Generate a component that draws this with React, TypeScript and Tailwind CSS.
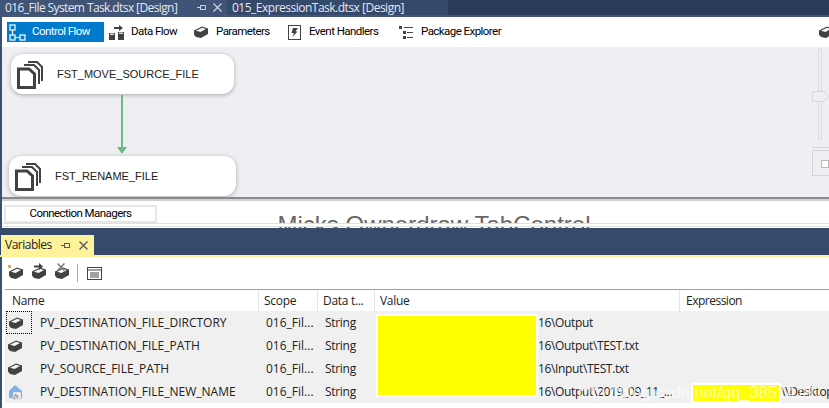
import React from "react";

const font = { fontFamily: '"Open Sans", "Noto Sans", sans-serif' };
const ui = { fontFamily: 'Roboto, "Open Sans", sans-serif' };
const arial = { fontFamily: '"Liberation Sans", sans-serif' };

const BoxIcon = ({ className = "" }: { className?: string }) => (
  <svg viewBox="0 0 16 16" className={className}>
    <path d="M1 6.5 L9 2.5 L15 4.5 L15 10 L8 14 L3 13 L1 10.5 Z" fill="#424242" />
    <path d="M3 6.8 L9 3.8 L13 5 L7.5 8 Z" fill="#f4f4f4" />
  </svg>
);

const FileStack = () => (
  <svg viewBox="0 0 26 30" className="h-[30px] w-[26px]">
    <path d="M11 3 H20 L25 8 V22" fill="none" stroke="#424242" strokeWidth="2" />
    <path d="M7 6 H17 L22 11 V25" fill="none" stroke="#424242" strokeWidth="2" />
    <path d="M1.5 10 H12 L17.5 15 V28.5 H1.5 Z" fill="#fff" stroke="#424242" strokeWidth="3" />
  </svg>
);

const ControlFlowIcon = () => (
  <svg viewBox="0 0 17 17" className="h-[17px] w-[17px]">
    <g fill="none" stroke="#fff" strokeWidth="1.2">
      <rect x="1" y="1" width="5" height="5" />
      <rect x="1" y="11" width="5" height="5" />
      <rect x="11" y="11" width="5" height="5" />
      <path d="M3.5 6 V11 M6 13.5 H11" />
    </g>
  </svg>
);

const DataFlowIcon = () => (
  <svg viewBox="0 0 17 17" className="h-[17px] w-[17px]">
    <path d="M6 3 H11 V1 L15 4 L11 7 V5 H6 Z" fill="#424242" />
    <path d="M1 9 H7 V16 H1 Z M10 8 H16 V16 H10 Z" fill="#424242" />
    <path d="M2 9.5 H6 V11 H2 Z M11 8.5 H15 V10 H11 Z" fill="#ddd" />
  </svg>
);

const EventIcon = () => (
  <svg viewBox="0 0 13 15" className="h-[15px] w-[13px]">
    <rect x="0.5" y="0.5" width="12" height="14" fill="#fff" stroke="#424242" />
    <path d="M5 3 H10 L7.5 6.5 H9.5 L4.5 12 L6 8 H3.5 Z" fill="#424242" />
  </svg>
);

const ExplorerIcon = () => (
  <svg viewBox="0 0 14 15" className="h-[15px] w-[14px]" fill="#424242">
    <rect x="0" y="1" width="3" height="3" />
    <rect x="5" y="2" width="9" height="1" />
    <rect x="4" y="6" width="3" height="3" />
    <rect x="8" y="7" width="6" height="1" />
    <rect x="4" y="11" width="3" height="3" />
    <rect x="8" y="12" width="6" height="1" />
  </svg>
);

const ExprIcon = () => (
  <svg viewBox="0 0 16 16" className="h-4 w-4">
    <path d="M8 1 L15 7 V14 H2 V7 Z" fill="#7fb2e5" />
    <rect x="6" y="8" width="8" height="7" fill="#f4f4f4" stroke="#9ab" strokeWidth="0.5" />
    <text x="7" y="14" fontSize="6" fontStyle="italic" fill="#333">fx</text>
  </svg>
);

const Pin = ({ color }: { color: string }) => (
  <svg viewBox="0 0 9 9" className="h-[9px] w-[9px]" fill="none" stroke={color}>
    <path d="M0 4.5 H3 M3.5 2 V7 M3.5 2.5 H8.5 V6.5 H3.5" />
  </svg>
);

const Close = ({ color }: { color: string }) => (
  <svg viewBox="0 0 9 9" className="h-[9px] w-[9px]" stroke={color} strokeWidth="1.3">
    <path d="M0.5 0.5 L8.5 8.5 M8.5 0.5 L0.5 8.5" />
  </svg>
);

const rows = [
  { name: "PV_DESTINATION_FILE_DIRCTORY", value: "16\\Output", expr: "", focus: true },
  { name: "PV_DESTINATION_FILE_PATH", value: "16\\Output\\TEST.txt", expr: "" },
  { name: "PV_SOURCE_FILE_PATH", value: "16\\Input\\TEST.txt", expr: "" },
  { name: "PV_DESTINATION_FILE_NEW_NAME", value: "16\\Output\\2019_09_11_...", expr: "\\\\Desktop", fx: true },
];

const Node = ({ label, className, gap }: { label: string; className: string; gap: string }) => (
  <div className={`absolute flex h-10 items-center rounded-[12px] bg-white shadow-[0_1px_4px_rgba(0,0,0,0.3)] ${className}`}>
    <div className="ml-[6px]"><FileStack /></div>
    <span className={`${gap} text-[11px] text-[#222]`} style={arial}>{label}</span>
  </div>
);

export default function App() {
  return (
    <div className="flex h-[408px] w-[829px] flex-col overflow-hidden bg-white text-[12px] text-black" style={font}>
      {/* doc tabs */}
      <div className="flex h-[15px] shrink-0 items-center bg-[#2a3b59] text-[12px] leading-none text-[#e4e8f0]">
        <div className="flex h-full w-[227px] items-center overflow-hidden bg-[#3f5477] pl-[5px]">
          <span className="w-[192px] whitespace-nowrap tracking-[-0.6px]">016_File System Task.dtsx [Design]</span>
          <Pin color="#c9d2e0" />
          <span className="w-[7px]" />
          <Close color="#c9d2e0" />
        </div>
        <div className="flex h-full w-[221px] items-center bg-[#35496b] pl-[5px]">
          <span className="whitespace-nowrap tracking-[-0.5px]">015_ExpressionTask.dtsx [Design]</span>
        </div>
      </div>
      <div className="h-[2px] shrink-0 bg-[#42567a]" />

      {/* designer */}
      <div className="flex h-[211px] shrink-0 flex-col border-l-2 border-[#3b4f70]">
        <div className="flex h-[30px] shrink-0 items-center bg-white pl-[5px] text-[11.5px] tracking-[-0.55px]" style={ui}>
          <div className="flex h-[20px] w-[97px] items-center gap-[6px] bg-[#007acc] pl-[2px] text-white">
            <ControlFlowIcon />
            <span>Control Flow</span>
          </div>
          <div className="ml-[4px] flex items-center gap-[6px]"><DataFlowIcon /><span className="w-[47px] whitespace-nowrap">Data Flow</span></div>
          <div className="ml-[15px] flex items-center gap-[7px]"><BoxIcon className="h-4 w-4" /><span className="w-[52px] whitespace-nowrap">Parameters</span></div>
          <div className="ml-[20px] flex items-center gap-[8px]"><EventIcon /><span className="w-[72px] whitespace-nowrap">Event Handlers</span></div>
          <div className="ml-[18px] flex items-center gap-[8px]"><ExplorerIcon /><span className="whitespace-nowrap">Package Explorer</span></div>
          <BoxIcon className="ml-auto mr-[-5px] h-4 w-4" />
        </div>

        <div className="relative h-[152px] shrink-0 overflow-hidden border-b-2 border-[#8b8b8b] bg-[#eeeff2]">
          <Node label="FST_MOVE_SOURCE_FILE" gap="ml-[14px]" className="left-[9px] top-[7px] w-[223px]" />
          <div className="absolute left-[119px] top-[48px] h-[55px] w-[2px] bg-[#6dbb80]" />
          <div className="absolute left-[115px] top-[100px] h-0 w-0 border-x-[5px] border-t-[7px] border-x-transparent border-t-[#6dbb80]" />
          <Node label="FST_RENAME_FILE" gap="ml-[14px]" className="left-[7px] top-[109px] w-[227px]" />
          <div className="absolute left-[816px] top-[1px] h-[92px] w-[4px] border border-[#dcdde0]" />
          <svg viewBox="0 0 17 11" className="absolute left-[810px] top-[44px] h-[11px] w-[17px]">
            <path d="M0.5 0.5 H12 L16.5 5.5 L12 10.5 H0.5 Z" fill="#eeeff2" stroke="#d4d5d8" />
          </svg>
          <div className="absolute left-[810px] top-[100px] h-px w-[17px] bg-[#d4d5d8]" />
          <div className="absolute left-[810px] top-[103px] h-[26px] w-[20px] border border-[#d4d5d8]" />
          <div className="absolute left-[819px] top-[113px] h-[8px] w-[8px] border border-[#b9babd] bg-white" />
        </div>

        <div className="h-[2px] shrink-0 bg-[#cdd0dc]" />
        <div className="relative flex-1 overflow-hidden bg-white">
          <div className="absolute left-[2px] top-[4px] flex h-[18px] w-[153px] items-center justify-center border-2 border-[#e6e6e6] bg-white text-[11.5px] tracking-[-0.55px]" style={ui}>
            Connection Managers
          </div>
          <div className="flex justify-center pl-[37px] pt-[10px] text-[24px] leading-[27px] whitespace-nowrap text-[#666]" style={arial}>
            Micks Ownerdraw TabControl
          </div>
          <div className="absolute inset-x-0 bottom-[1px] h-[4px] border-y border-[#e0e0e0] bg-white" />
        </div>
      </div>

      {/* variables panel */}
      <div className="h-[7px] shrink-0 bg-[#364a6b]" />
      <div className="flex h-[20px] shrink-0 bg-[#364a6b]">
        <div className="ml-[1px] flex w-[93px] items-center bg-[#fff29d] pl-[4px] text-[#222]">
          <span className="w-[56px] tracking-[-0.5px]">Variables</span>
          <Pin color="#555" />
          <span className="w-[9px]" />
          <Close color="#555" />
        </div>
      </div>
      <div className="h-[2px] shrink-0 bg-[#fff29d]" />

      <div className="relative flex flex-1 flex-col border-l-2 border-[#3b4f70] bg-white">
        <div className="flex h-[32px] shrink-0 items-center gap-[7px] pl-[6px]">
          <div className="relative">
            <BoxIcon className="h-4 w-4" />
            <div className="absolute left-0 top-0 h-[3px] w-[3px] bg-[#e8a33d]" />
          </div>
          <div className="relative">
            <BoxIcon className="h-4 w-4" />
            <svg viewBox="0 0 9 7" className="absolute left-[3px] top-[-2px] h-[7px] w-[9px]">
              <path d="M0 2.5 H5 V0 L9 3.5 L5 7 V4.5 H0 Z" fill="#424242" />
            </svg>
          </div>
          <div className="relative">
            <BoxIcon className="h-4 w-4" />
            <svg viewBox="0 0 8 8" className="absolute left-[3px] top-[-2px] h-2 w-2" stroke="#777" strokeWidth="1.5">
              <path d="M0.5 0.5 L7.5 7.5 M7.5 0.5 L0.5 7.5" />
            </svg>
          </div>
          <div className="h-[18px] w-px bg-[#aaa]" />
          <svg viewBox="0 0 15 13" className="ml-[2px] h-[13px] w-[15px]">
            <rect x="0.5" y="0.5" width="14" height="12" fill="#fff" stroke="#424242" />
            <path d="M0 3 H15 M3 6 H12 M3 8 H12 M3 10 H12" stroke="#424242" />
          </svg>
        </div>

        <div className="ml-[3px] grid h-[22px] shrink-0 grid-cols-[254px_59px_57px_305px_1fr] border-t border-[#a0a0a0] text-[#222]">
          <div className="flex items-center border-r border-[#e5e5e5] pl-[7px] tracking-[-0.3px]">Name</div>
          <div className="flex items-center border-r border-[#e5e5e5] pl-[5px] tracking-[-0.3px]">Scope</div>
          <div className="flex items-center border-r border-[#e5e5e5] pl-[5px] tracking-[-0.3px]">Data t...</div>
          <div className="flex items-center border-r border-[#e5e5e5] pl-[5px] tracking-[-0.3px]">Value</div>
          <div className="flex items-center pl-[6px] tracking-[-0.5px]">Expression</div>
        </div>

        <div className="ml-[3px] bg-[#f0f0f0] text-[#222]">
          {rows.map((r) => (
            <div key={r.name} className="grid h-[23px] grid-cols-[254px_59px_57px_305px_1fr] items-center overflow-hidden whitespace-nowrap">
              <div className="flex items-center">
                <div className={`ml-[1px] flex h-[23px] w-[26px] items-center pl-[1px] ${r.focus ? "border border-dotted border-black" : ""}`}>
                  {r.fx ? <ExprIcon /> : <BoxIcon className="h-4 w-4" />}
                </div>
                <span className="ml-[8px]">{r.name}</span>
              </div>
              <div className="pl-[7px]">016_Fil...</div>
              <div className="pl-[7px] tracking-[-0.3px]">String</div>
              <div className="pl-[163px] tracking-[-0.35px]">{r.value}</div>
              <div className="pl-[101px] tracking-[-0.3px]">{r.expr}</div>
            </div>
          ))}
        </div>

        {/* redaction blocks and watermark */}
        <div className="absolute left-[374px] top-[57px] h-[83px] w-[162px] border-2 border-white bg-[#ffff00]" />
        <div className="absolute left-[689px] top-[126px] h-[20px] w-[90px] border-2 border-white bg-[#ffff00]" />
        <div className="absolute left-[576px] top-[123px] whitespace-nowrap text-[16.5px] text-white/70" style={arial}>
          http://blog.csdn.net/qq_38514191
        </div>
      </div>
    </div>
  );
}
